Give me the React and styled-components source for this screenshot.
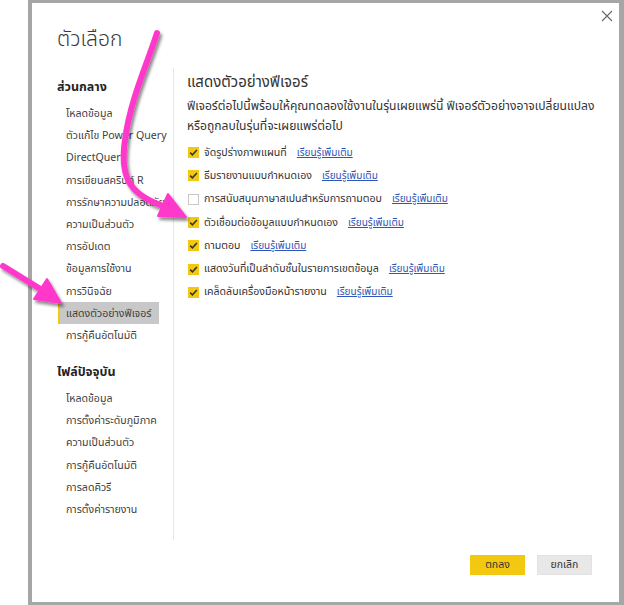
import styled, { createGlobalStyle } from "styled-components";

const GlobalStyle = createGlobalStyle`
  html, body {
    margin: 0;
    padding: 0;
    background: #ffffff;
  }
  body {
    font-family: "Segoe UI", "Noto Sans", "Noto Sans Thai", "Open Sans", sans-serif;
    color: #333333;
  }
`;

const generalItems = [
  "โหลดข้อมูล",
  "ตัวแก้ไข Power Query",
  "DirectQuery",
  "การเขียนสคริปต์ R",
  "การรักษาความปลอดภัย",
  "ความเป็นส่วนตัว",
  "การอัปเดต",
  "ข้อมูลการใช้งาน",
  "การวินิจฉัย",
  "แสดงตัวอย่างฟีเจอร์",
  "การกู้คืนอัตโนมัติ",
];

const fileItems = [
  "โหลดข้อมูล",
  "การตั้งค่าระดับภูมิภาค",
  "ความเป็นส่วนตัว",
  "การกู้คืนอัตโนมัติ",
  "การลดคิวรี",
  "การตั้งค่ารายงาน",
];

const features = [
  { label: "จัดรูปร่างภาพแผนที่", checked: true },
  { label: "ธีมรายงานแบบกำหนดเอง", checked: true },
  { label: "การสนับสนุนภาษาสเปนสำหรับการถามตอบ", checked: false },
  { label: "ตัวเชื่อมต่อข้อมูลแบบกำหนดเอง", checked: true },
  { label: "ถามตอบ", checked: true },
  { label: "แสดงวันที่เป็นลำดับชั้นในรายการเขตข้อมูล", checked: true },
  { label: "เคล็ดลับเครื่องมือหน้ารายงาน", checked: true },
];

function App() {
  return (
    <>
      <GlobalStyle />
      <Page>
        <Dialog>
          <CloseButton aria-label="close">
            <svg width="12" height="12" viewBox="0 0 12 12">
              <path d="M1 1 L11 11 M11 1 L1 11" stroke="#6b6b6b" strokeWidth="1.2" fill="none" />
            </svg>
          </CloseButton>
          <Title>ตัวเลือก</Title>
          <Body>
            <Sidebar>
              <SectionHeading>ส่วนกลาง</SectionHeading>
              <NavList>
                {generalItems.map((item) => (
                  <NavItem key={item} selected={item === "แสดงตัวอย่างฟีเจอร์"}>
                    {item}
                  </NavItem>
                ))}
              </NavList>
              <SectionHeading second>ไฟล์ปัจจุบัน</SectionHeading>
              <NavList>
                {fileItems.map((item) => (
                  <NavItem key={item}>{item}</NavItem>
                ))}
              </NavList>
            </Sidebar>
            <Content>
              <ContentHeading>แสดงตัวอย่างฟีเจอร์</ContentHeading>
              <Description>
                ฟีเจอร์ต่อไปนี้พร้อมให้คุณทดลองใช้งานในรุ่นเผยแพร่นี้ ฟีเจอร์ตัวอย่างอาจเปลี่ยนแปลง
                <br />
                หรือถูกลบในรุ่นที่จะเผยแพร่ต่อไป
              </Description>
              <FeatureList>
                {features.map((f) => (
                  <FeatureRow key={f.label}>
                    <CheckBox checked={f.checked}>
                      {f.checked && (
                        <svg width="11" height="11" viewBox="0 0 11 11">
                          <path d="M2.2 5.6 L4.4 7.8 L8.9 3" stroke="#333" strokeWidth="1.5" fill="none" />
                        </svg>
                      )}
                    </CheckBox>
                    <FeatureLabel>{f.label}</FeatureLabel>
                    <LearnMore href="#">เรียนรู้เพิ่มเติม</LearnMore>
                  </FeatureRow>
                ))}
              </FeatureList>
            </Content>
          </Body>
          <Footer>
            <Button primary>ตกลง</Button>
            <Button>ยกเลิก</Button>
          </Footer>
        </Dialog>
        <Arrows width="624" height="605" viewBox="0 0 624 605">
          <defs>
            <filter id="sh" x="-20%" y="-20%" width="140%" height="140%">
              <feDropShadow dx="2" dy="3" stdDeviation="1.6" floodColor="#000" floodOpacity="0.45" />
            </filter>
          </defs>
          <g filter="url(#sh)" fill="#ff38cc" stroke="#ff38cc" strokeLinecap="round" strokeLinejoin="round">
            <path d="M157 33 C148 62 130 100 125 140 C119 180 132 196 166 207" fill="none" strokeWidth="6" />
            <polygon points="186,217 158,216 168,194" strokeWidth="2" />
            <path d="M3 266 L42 290" fill="none" strokeWidth="6" />
            <polygon points="61,303 34,299 47,279" strokeWidth="2" />
          </g>
        </Arrows>
      </Page>
    </>
  );
}

export default App;

const Page = styled.div`
  position: relative;
  width: 624px;
  height: 605px;
  overflow: hidden;
`;

const Dialog = styled.div`
  position: relative;
  box-sizing: border-box;
  margin-left: 28px;
  width: 596px;
  height: 605px;
  background: #ffffff;
  border-style: solid;
  border-color: #a6a6a6;
  border-width: 3px 5px 3px 4px;
  display: flex;
  flex-direction: column;
`;

const CloseButton = styled.div`
  position: absolute;
  top: 7px;
  right: 6px;
  width: 12px;
  height: 12px;
  display: flex;
`;

const Title = styled.div`
  height: 65px;
  box-sizing: border-box;
  padding: 22px 0 0 25px;
  font-size: 21px;
  line-height: 26px;
  font-weight: 300;
  color: #3a3a3a;
`;

const Body = styled.div`
  display: flex;
  height: 472px;
`;

const Sidebar = styled.div`
  width: 141px;
  box-sizing: border-box;
  padding: 8px 0 0 26px;
  display: flex;
  flex-direction: column;
`;

const SectionHeading = styled.div`
  margin-left: -1px;
  margin-top: ${(p) => (p.second ? "15px" : "0")};
  font-size: 12.5px;
  font-weight: 700;
  line-height: 22px;
  color: #252423;
  margin-bottom: 4px;
`;

const NavList = styled.div`
  display: flex;
  flex-direction: column;
`;

const NavItem = styled.div`
  width: 101px;
  height: 22.2px;
  line-height: 22.2px;
  box-sizing: border-box;
  padding-left: ${(p) => (p.selected ? "6px" : "8px")};
  border-left: ${(p) => (p.selected ? "2px solid #f2c811" : "none")};
  background: ${(p) => (p.selected ? "#c8c8c8" : "transparent")};
  font-size: 10.6px;
  color: #404040;
  white-space: nowrap;
`;

const Content = styled.div`
  flex: 1;
  border-left: 1px solid #e6e6e6;
  padding: 2px 0 0 13px;
  display: flex;
  flex-direction: column;
`;

const ContentHeading = styled.div`
  font-size: 15px;
  line-height: 22px;
  color: #333333;
`;

const Description = styled.div`
  margin-top: 4px;
  font-size: 12.1px;
  line-height: 20px;
  color: #333333;
  white-space: nowrap;
`;

const FeatureList = styled.div`
  margin-top: 5px;
  display: flex;
  flex-direction: column;
`;

const FeatureRow = styled.div`
  height: 23.3px;
  display: flex;
  align-items: center;
`;

const CheckBox = styled.div`
  box-sizing: border-box;
  width: 11px;
  height: 11px;
  margin: 0 5px 0 1px;
  background: ${(p) => (p.checked ? "#f2c811" : "#ffffff")};
  border: ${(p) => (p.checked ? "none" : "1px solid #c8c8c8")};
  display: flex;
  align-items: center;
  justify-content: center;
`;

const FeatureLabel = styled.span`
  font-size: 10.6px;
  color: #333333;
  margin-right: 10px;
`;

const LearnMore = styled.a`
  font-size: 10px;
  color: #2f55b8;
  text-decoration: underline;
`;

const Footer = styled.div`
  flex: 1;
  display: flex;
  justify-content: flex-end;
  align-items: flex-start;
  gap: 12px;
  padding: 15px 27px 0 0;
`;

const Button = styled.div`
  width: 55px;
  height: 20px;
  box-sizing: border-box;
  display: flex;
  align-items: center;
  justify-content: center;
  font-size: 10.5px;
  color: #333333;
  background: ${(p) => (p.primary ? "#f2c811" : "#e8e8e8")};
  border: 1px solid ${(p) => (p.primary ? "#f2c811" : "#e2e2e2")};
`;

const Arrows = styled.svg`
  position: absolute;
  left: 0;
  top: 0;
  pointer-events: none;
`;
